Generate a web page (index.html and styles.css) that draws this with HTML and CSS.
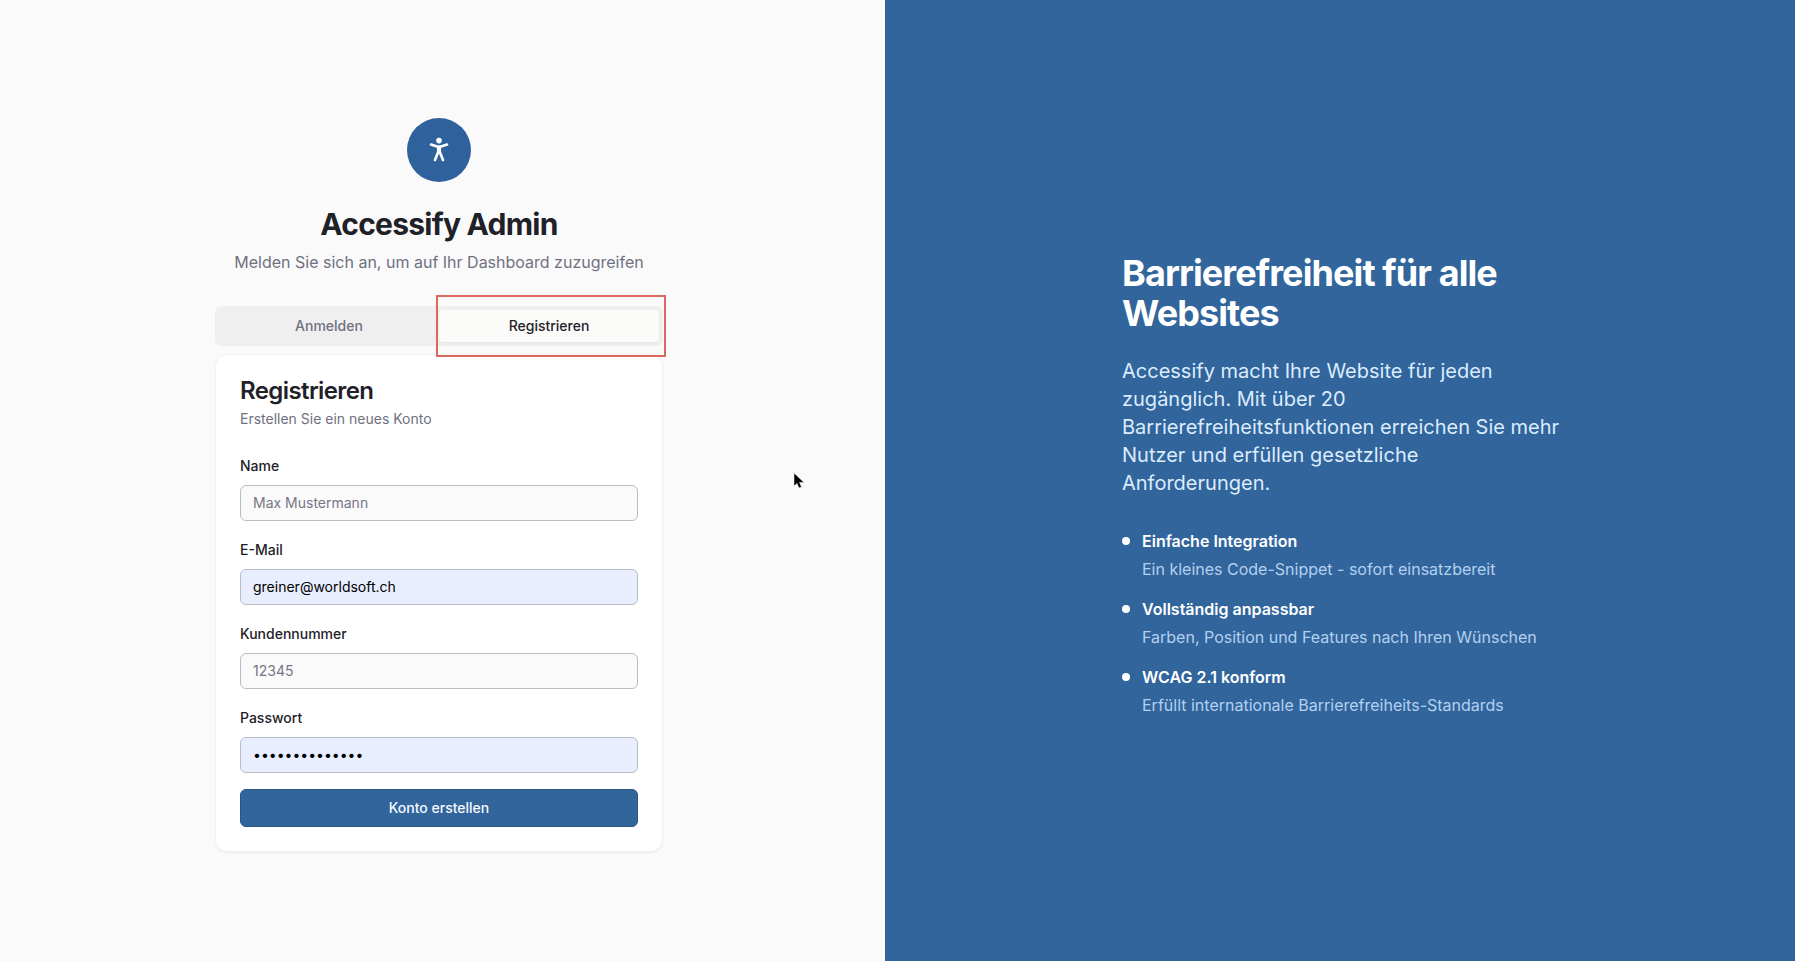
FILE: index.html
```
<!DOCTYPE html>
<html lang="de">
<head>
  <meta charset="UTF-8" />
  <meta name="viewport" content="width=device-width, initial-scale=1.0" />
  <title>Accessify Admin</title>
  <link rel="stylesheet" href="styles.css">
</head>
<body>
  <div class="page">
    <!-- Login / register -->
    <main class="auth">
      <div class="auth-inner">
        <div class="logo">
          <svg width="32" height="32" viewBox="0 0 32 32" fill="none" stroke="#fff" stroke-width="2.6" stroke-linecap="round" stroke-linejoin="round">
            <circle cx="16" cy="6.600" r="2.800" fill="#fff" stroke="none" />
            <path d="M8 10.600l6 1.900h4l6-1.900" />
            <path d="M15.200 13v5l-3.200 8M16.800 13v5l3.200 8" />
          </svg>
        </div>
        <h1>Accessify Admin</h1>
        <p class="subtitle">Melden Sie sich an, um auf Ihr Dashboard zuzugreifen</p>

        <div class="tabs" role="tablist">
          <button type="button" class="tab" role="tab" aria-selected="false">Anmelden</button>
          <button type="button" class="tab active" role="tab" aria-selected="true">Registrieren</button>
          <span class="highlight"></span>
        </div>

        <section class="card">
          <h2>Registrieren</h2>
          <p class="card-text">Erstellen Sie ein neues Konto</p>
          <form>
            <div class="field">
              <label for="name">Name</label>
              <input type="text" id="name" placeholder="Max Mustermann">
            </div>
            <div class="field">
              <label for="email">E-Mail</label>
              <input type="email" id="email" class="filled" value="greiner@worldsoft.ch">
            </div>
            <div class="field">
              <label for="customer">Kundennummer</label>
              <input type="text" id="customer" placeholder="12345">
            </div>
            <div class="field">
              <label for="password">Passwort</label>
              <input type="password" id="password" class="filled" value="abcdefghijklmn">
            </div>
            <button type="submit" class="submit">Konto erstellen</button>
          </form>
        </section>
      </div>
      <svg class="cursor" width="12" height="18" viewBox="0 0 12 18">
        <path d="M1 1v13l3-2.600 2 4.600 2.500-1.100-2-4.500h4.500z" fill="#000" stroke="#fff" stroke-width="0.500" />
      </svg>
    </main>

    <!-- Product info -->
    <aside class="info">
      <div class="info-inner">
        <h2>Barrierefreiheit für alle Websites</h2>
        <p class="lead">Accessify macht Ihre Website für jeden zugänglich. Mit über 20 Barrierefreiheitsfunktionen erreichen Sie mehr Nutzer und erfüllen gesetzliche Anforderungen.</p>
        <ul class="features">
          <li>
            <h3>Einfache Integration</h3>
            <p>Ein kleines Code-Snippet - sofort einsatzbereit</p>
          </li>
          <li>
            <h3>Vollständig anpassbar</h3>
            <p>Farben, Position und Features nach Ihren Wünschen</p>
          </li>
          <li>
            <h3>WCAG 2.1 konform</h3>
            <p>Erfüllt internationale Barrierefreiheits-Standards</p>
          </li>
        </ul>
      </div>
    </aside>
  </div>
</body>
</html>
```
FILE: styles.css
```
* {
  box-sizing: border-box;
}

body {
  margin: 0;
  font-family: Inter, "Liberation Sans", sans-serif;
  font-size: 16px;
  line-height: 24px;
  color: #1f2128;
  background-color: #fafafb;
}

h1, h2, h3, p, ul {
  margin: 0;
  padding: 0;
}

button, input {
  font-family: inherit;
  font-size: 14px;
}

.page {
  display: grid;
  grid-template-columns: 885fr 910fr;
  min-height: 100vh;
}

/* Left side */
.auth {
  position: relative;
  display: flex;
  align-items: center;
  justify-content: center;
  padding: 8px 7px 0 0;
}

.auth-inner {
  width: 100%;
  max-width: 448px;
}

.logo {
  display: flex;
  align-items: center;
  justify-content: center;
  width: 64px;
  height: 64px;
  margin: 0 auto 24px;
  border-radius: 50%;
  background-color: #2f629d;
}

h1 {
  font-size: 30px;
  line-height: 36px;
  font-weight: 700;
  letter-spacing: -0.025em;
  text-align: center;
}

.subtitle {
  margin-top: 8px;
  text-align: center;
  color: #6f7180;
}

.tabs {
  position: relative;
  display: grid;
  grid-template-columns: 1fr 1fr;
  height: 40px;
  margin-top: 32px;
  padding: 4px;
  border-radius: 6px;
  background-color: #efeff0;
}

.tab {
  border: none;
  border-radius: 4px;
  background: none;
  font-weight: 500;
  color: #6f7180;
  cursor: pointer;
}

.tab.active {
  background-color: #fbfbfa;
  color: #1f2128;
  box-shadow: 0 1px 2px rgba(0, 0, 0, 0.05);
}

/* Marker around the register tab */
.highlight {
  position: absolute;
  top: -11px;
  right: -3px;
  bottom: -11px;
  width: 230px;
  border: 2px solid #d9695f;
  pointer-events: none;
}

.card {
  margin-top: 8px;
  padding: 24px;
  border: 1px solid #f2f2f4;
  border-radius: 12px;
  background-color: #fff;
  box-shadow: 0 1px 2px rgba(0, 0, 0, 0.05);
}

.card h2 {
  font-size: 24px;
  line-height: 24px;
  font-weight: 600;
  letter-spacing: -0.025em;
}

.card-text {
  margin: 6px 0 24px;
  font-size: 14px;
  line-height: 20px;
  color: #6f7180;
}

.field {
  margin-bottom: 16px;
}

.field label {
  font-size: 14px;
  line-height: 20px;
  font-weight: 500;
}

.field input {
  display: block;
  width: 100%;
  height: 36px;
  margin-top: 8px;
  padding: 0 12px;
  border: 1px solid #b9bbc5;
  border-radius: 6px;
  background-color: #fafafb;
  color: #000;
}

.field input::placeholder {
  color: #757684;
}

.field input.filled {
  background-color: #e8eefd;
}

.submit {
  display: block;
  width: 100%;
  height: 38px;
  border: 1px solid #2a5585;
  border-radius: 6px;
  background-color: #31659c;
  font-weight: 500;
  color: #f4f9ff;
  cursor: pointer;
}

.cursor {
  position: absolute;
  left: 793px;
  top: 472px;
}

/* Right side */
.info {
  display: flex;
  align-items: center;
  justify-content: center;
  padding: 9px 0 0 12px;
  background-color: #31659c;
  color: #fff;
}

.info-inner {
  width: 100%;
  max-width: 448px;
}

.info h2 {
  font-size: 36px;
  line-height: 40px;
  font-weight: 700;
  letter-spacing: -0.025em;
}

.lead {
  margin-top: 24px;
  font-size: 20px;
  line-height: 28px;
  color: #dcecfc;
}

.features {
  display: grid;
  gap: 16px;
  margin-top: 32px;
  list-style: none;
}

.features li {
  position: relative;
  padding-left: 20px;
}

.features li::before {
  content: "";
  position: absolute;
  left: 0;
  top: 8px;
  width: 8px;
  height: 8px;
  border-radius: 50%;
  background-color: #fff;
}

.features h3 {
  font-size: 16px;
  font-weight: 600;
}

.features p {
  margin-top: 4px;
  color: #b4d0f0;
}

@media (max-width: 900px) {
  .page {
    grid-template-columns: 1fr;
  }

  .auth, .info {
    padding: 32px 16px;
  }

  .cursor {
    display: none;
  }
}
```
